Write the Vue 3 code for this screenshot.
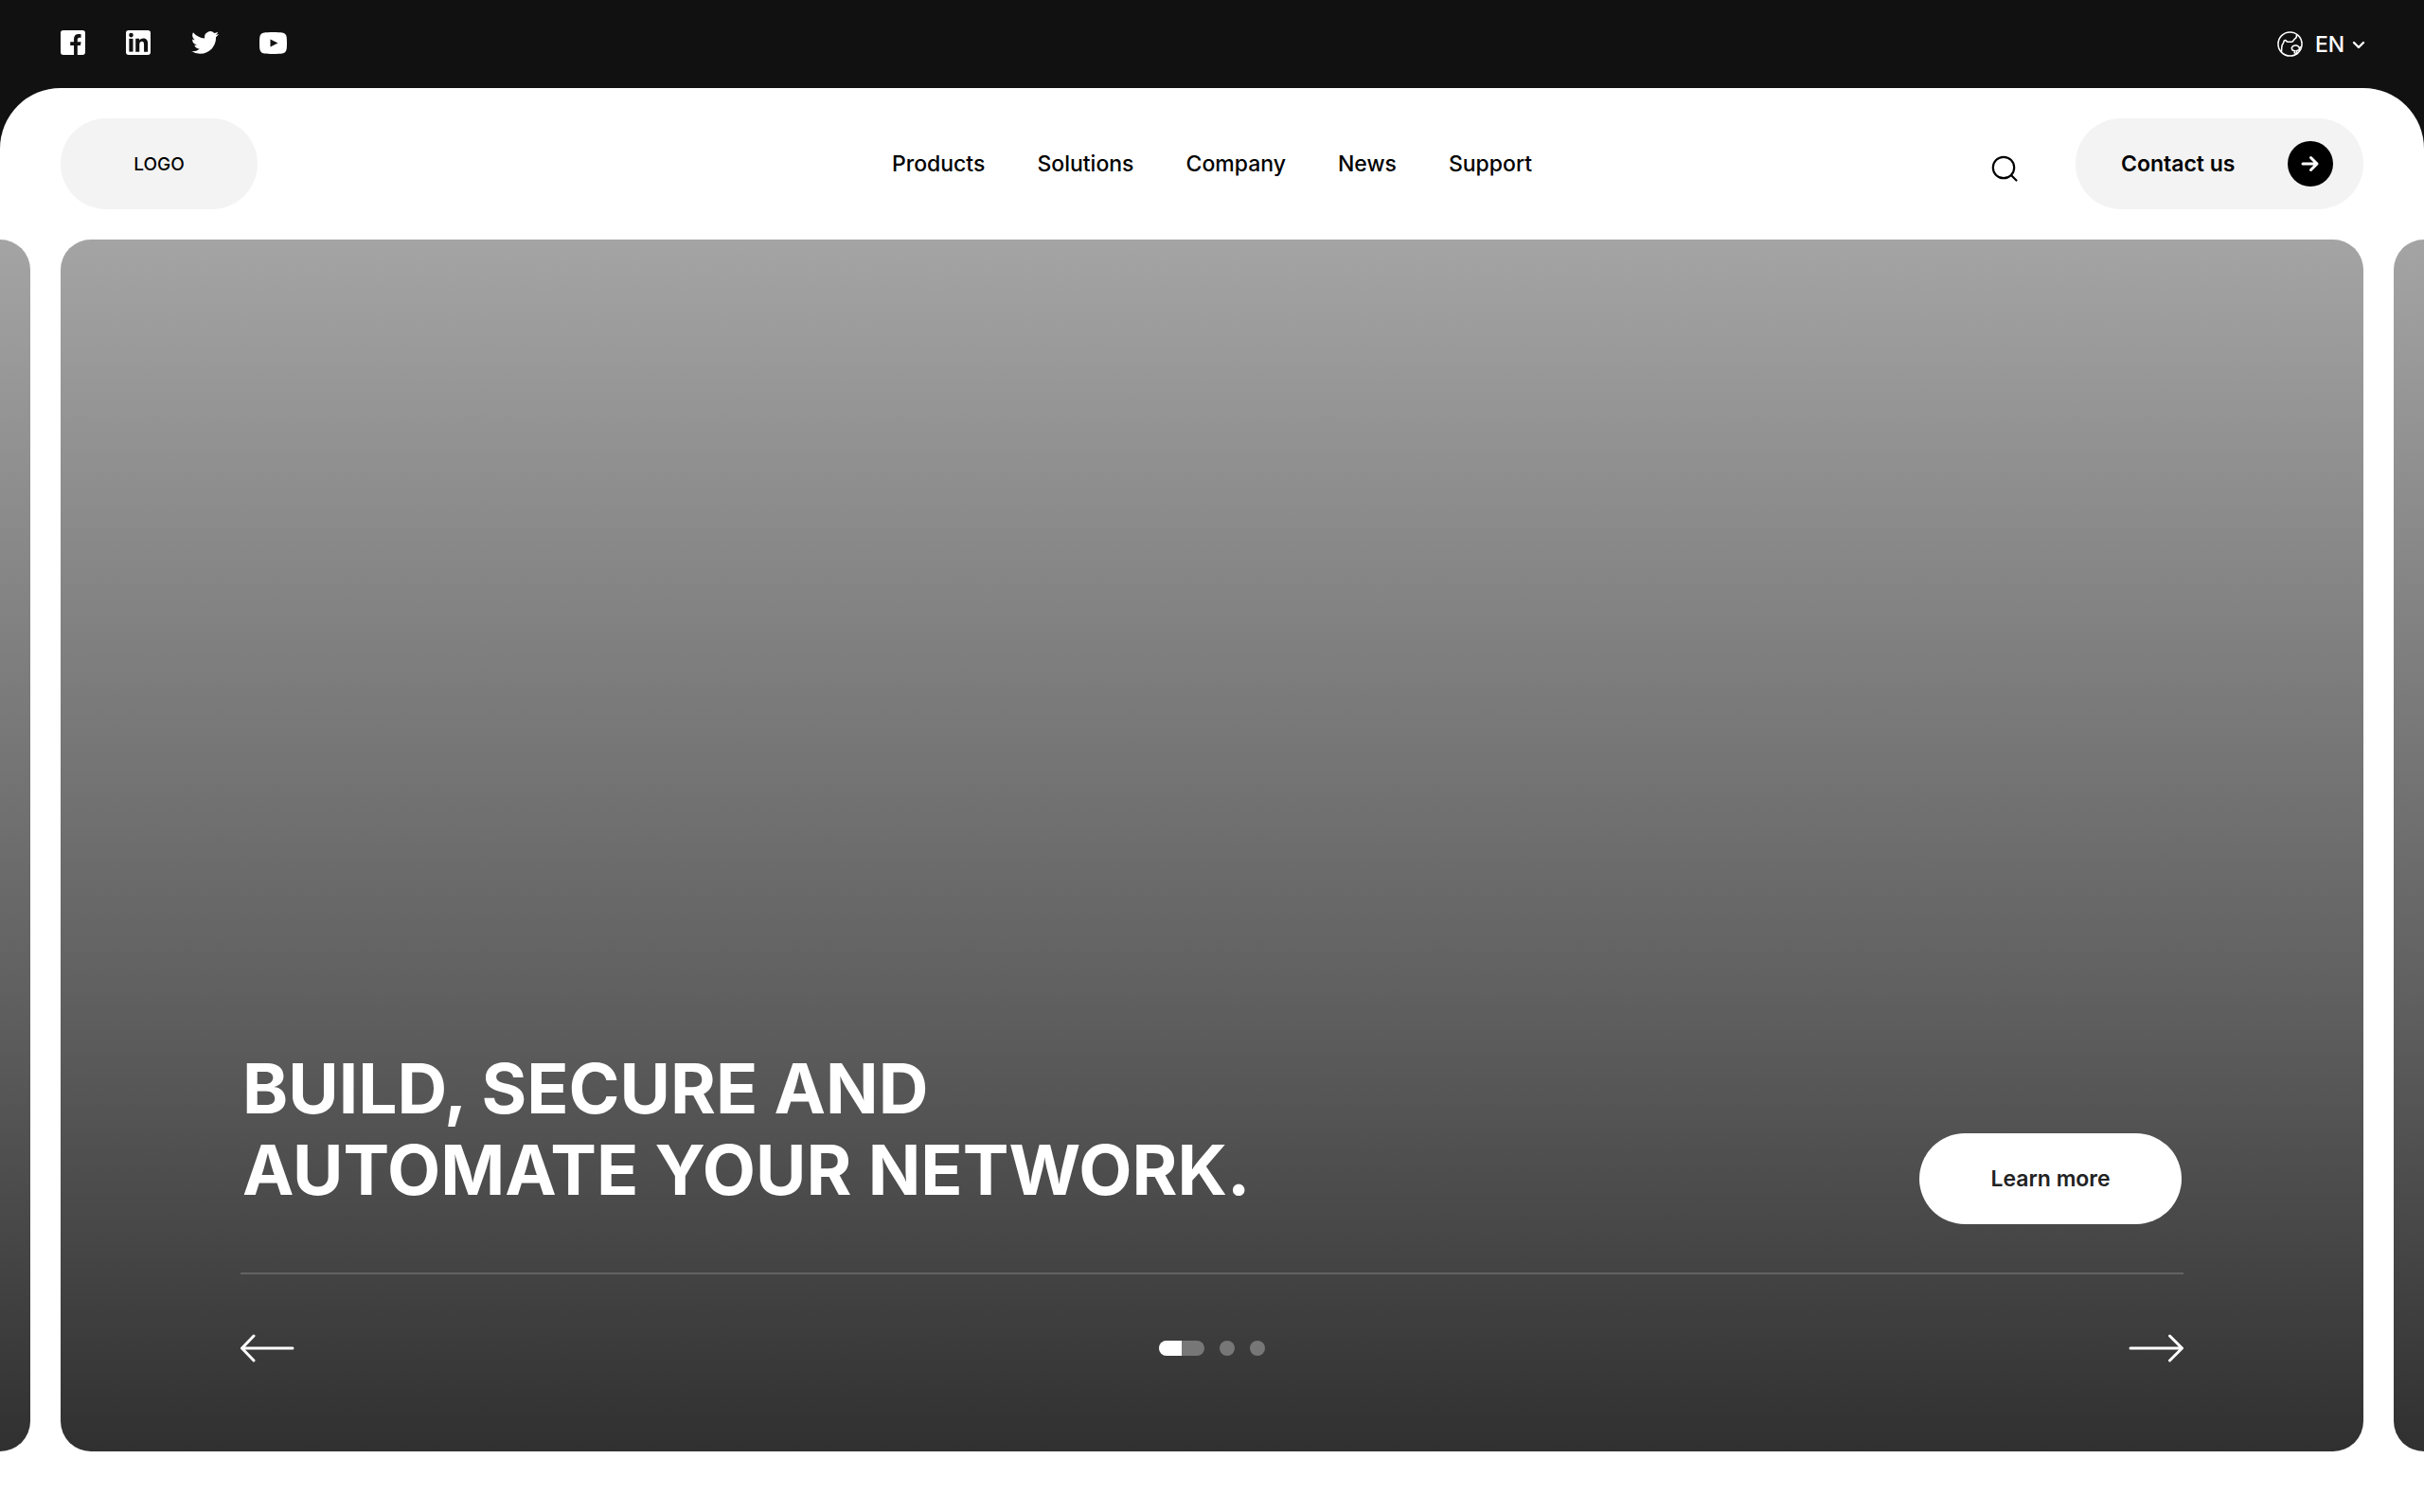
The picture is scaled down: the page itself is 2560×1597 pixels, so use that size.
<script setup>
import { ref } from 'vue'

const navItems = ['Products', 'Solutions', 'Company', 'News', 'Support']

const slides = [0, 1, 2]
const active = ref(0)
const progress = ref(50)
const language = ref('EN')

function go(step) {
  active.value = (active.value + step + slides.length) % slides.length
}
</script>

<template>
  <div class="page">
    <div class="topbar">
      <div class="social">
        <a href="#" aria-label="Facebook">
          <svg width="26" height="26" viewBox="0 0 27 27">
            <path
              fill="#fff"
              d="M3 0h21a3 3 0 0 1 3 3v21a3 3 0 0 1-3 3h-5.500V16.500h3.300l.6-3.900h-3.900v-2.400c0-1.200.6-2.200 2.200-2.200h1.700V4.400c-.6-.1-1.600-.3-2.700-.3-3.200 0-5.100 1.900-5.100 5.300v3.200h-4v3.900h4V27H3a3 3 0 0 1-3-3V3a3 3 0 0 1 3-3z"
            />
          </svg>
        </a>
        <a href="#" aria-label="LinkedIn">
          <svg width="26" height="26" viewBox="0 0 27 27">
            <rect width="27" height="27" rx="3" fill="#fff" />
            <g fill="#111">
              <circle cx="5.700" cy="5.300" r="2.400" />
              <path d="M3.500 9.200h4.300V23.500H3.500z" />
              <path
                d="M10.600 9.200h4.100v1.900c.7-1.300 2.200-2.300 4.300-2.300 4 0 5 2.500 5 6.200v8.500h-4.200v-7.500c0-2-.3-3.700-2.300-3.700s-2.700 1.500-2.700 3.600v7.600h-4.200z"
              />
            </g>
          </svg>
        </a>
        <a href="#" aria-label="Twitter">
          <svg width="29" height="26" viewBox="0 1.500 24 21">
            <path
              fill="#fff"
              d="M23.950 4.570a10 10 0 0 1-2.820.77 4.960 4.960 0 0 0 2.160-2.720c-.95.550-2 .95-3.130 1.180a4.920 4.920 0 0 0-8.380 4.480C7.690 8.090 4.070 6.130 1.640 3.160a4.820 4.820 0 0 0-.67 2.480c0 1.710.87 3.210 2.190 4.100a4.900 4.900 0 0 1-2.230-.62v.06a4.920 4.920 0 0 0 3.950 4.830 5 5 0 0 1-2.210.08 4.940 4.940 0 0 0 4.600 3.420A9.870 9.870 0 0 1 0 19.540a13.990 13.990 0 0 0 7.560 2.210c9.050 0 14-7.500 14-13.980 0-.21 0-.42-.02-.63a9.940 9.940 0 0 0 2.460-2.550z"
            />
          </svg>
        </a>
        <a href="#" aria-label="YouTube">
          <svg width="29" height="23" viewBox="0 0 29 23">
            <path
              fill="#fff"
              d="M14.500 0c4 0 7.500.2 9.500.5 2.800.4 4.300 1.900 4.700 4.700.2 1.700.3 3.900.3 6.300s-.1 4.600-.3 6.300c-.4 2.800-1.900 4.300-4.700 4.700-2 .3-5.500.5-9.500.5s-7.500-.2-9.500-.5c-2.800-.4-4.300-1.900-4.700-4.700C.1 16.100 0 13.900 0 11.500s.1-4.600.3-6.300C.7 2.400 2.200.9 5 .5 7 .2 10.500 0 14.500 0z"
            />
            <path fill="#111" d="M11.500 7.500v8l8-4z" />
          </svg>
        </a>
      </div>

      <label class="language">
        <svg width="27" height="27" viewBox="0 0 28 28" fill="none" stroke="#fff" stroke-width="1.600" stroke-linejoin="round" aria-hidden="true">
          <circle cx="14" cy="14" r="13" />
          <path d="M4.500 22.800c.6-2.600.1-5 .9-7.800.3-1 1.300-1.400 1.500-2.600.2-1.400.8-2.700 2-2.600 1.200.2 1 1.700 2.600 1.800 1.700.1 3.400.4 5-.2 1.500-.7 1.500-2.200 3-3.300 1.900-1.200 2.200-2.400 1.600-4.300" />
          <path d="M20.300 15.400l-3.300 1-1.200 2 .8 2.400 2.700.8-.5 2 3.500 1.200M26.500 16.600l-2.200 1.600M20.300 15.400l2.200.6 1.800 2.200-.3 2.200-3 1.200 1.200 3" />
        </svg>
        <select v-model="language" aria-label="Language">
          <option>EN</option>
        </select>
        <svg width="14" height="14" viewBox="0 0 14 14" fill="none" stroke="#fff" stroke-width="2.400" stroke-linecap="round" stroke-linejoin="round" aria-hidden="true">
          <path d="M2 5l5 5 5-5" />
        </svg>
      </label>
    </div>

    <main class="content">
      <header class="header">
        <a class="logo" href="#">LOGO</a>

        <nav class="nav">
          <a v-for="item in navItems" :key="item" href="#">{{ item }}</a>
        </nav>

        <div class="header-actions">
          <button type="button" class="search" aria-label="Search">
            <svg width="32" height="40" viewBox="0 0 32 40" fill="none" stroke="#000" stroke-width="2.200" stroke-linecap="round">
              <circle cx="14" cy="24" r="11.200" />
              <path d="M22 32l5.500 5.500" />
            </svg>
          </button>
          <button type="button" class="contact">
            Contact us
            <span class="contact-icon">
              <svg width="20" height="20" viewBox="0 0 20 20" fill="none" stroke="#fff" stroke-width="3" stroke-linecap="round" stroke-linejoin="round">
                <path d="M2 10h15M10.500 3.500l6.500 6.500-6.500 6.500" />
              </svg>
            </span>
          </button>
        </div>
      </header>

      <section class="carousel">
        <div class="peek peek-left"></div>

        <article class="slide">
          <div class="slide-main">
            <h1>BUILD, SECURE AND<br />AUTOMATE YOUR NETWORK.</h1>
            <button type="button" class="learn-more">Learn more</button>
          </div>

          <div class="controls">
            <button type="button" class="arrow" aria-label="Previous slide" @click="go(-1)">
              <svg width="58" height="30" viewBox="1 0 58 30" fill="none" stroke="#fff" stroke-width="3" stroke-linecap="round" stroke-linejoin="round">
                <path d="M56 15H2.500M15 2L2.500 15 15 28" />
              </svg>
            </button>
            <div class="dots">
              <button
                v-for="slide in slides"
                :key="slide"
                type="button"
                class="dot"
                :class="{ active: slide === active }"
                :aria-label="`Slide ${slide + 1}`"
                @click="active = slide"
              >
                <span v-if="slide === active" class="dot-progress" :style="{ width: progress + '%' }"></span>
              </button>
            </div>
            <button type="button" class="arrow" aria-label="Next slide" @click="go(1)">
              <svg width="58" height="30" viewBox="0 0 58 30" fill="none" stroke="#fff" stroke-width="3" stroke-linecap="round" stroke-linejoin="round">
                <path d="M2 15h54M43.500 2l13 13-13 13" />
              </svg>
            </button>
          </div>
        </article>

        <div class="peek peek-right"></div>
      </section>
    </main>
  </div>
</template>

<style>
body {
  margin: 0;
  background: #fff;
}
</style>

<style scoped>
.page {
  --slide-bg: linear-gradient(180deg, #a4a4a4 0%, #5d5d5d 65%, #303030 100%);
  display: flex;
  flex-direction: column;
  min-height: 100vh;
  background: #111;
  color: #000;
  font-family: Inter, "Liberation Sans", sans-serif;
  font-size: 23px;
  font-weight: 500;
}

a {
  color: inherit;
  text-decoration: none;
}

button {
  padding: 0;
  border: none;
  background: none;
  color: inherit;
  font: inherit;
  cursor: pointer;
}

svg {
  display: block;
}

.topbar {
  display: flex;
  align-items: center;
  justify-content: space-between;
  height: 93px;
  padding: 0 62px 0 64px;
}

.social {
  display: flex;
  align-items: center;
  gap: 43px;
  padding-bottom: 3px;
}

.language {
  display: flex;
  align-items: center;
  color: #fff;
}

.language select {
  width: 34px;
  margin: 0 5px 0 13px;
  padding: 0;
  border: none;
  appearance: none;
  background: transparent;
  color: inherit;
  font: inherit;
  cursor: pointer;
}

.content {
  display: flex;
  flex: 1;
  flex-direction: column;
  padding-bottom: 64px;
  border-radius: 64px 64px 0 0;
  background: #fff;
}

.header {
  display: grid;
  grid-template-columns: 1fr auto 1fr;
  align-items: center;
  padding: 32px 64px;
}

.logo {
  display: flex;
  align-items: center;
  justify-content: center;
  width: 208px;
  height: 96px;
  border-radius: 48px;
  background: #f3f3f3;
  font-size: 19px;
}

.nav {
  display: flex;
  gap: 55px;
}

.header-actions {
  display: flex;
  align-items: center;
  justify-content: flex-end;
  gap: 58px;
}

.contact {
  display: flex;
  align-items: center;
  justify-content: space-between;
  width: 304px;
  height: 96px;
  padding: 0 32px 0 48px;
  border-radius: 48px;
  background: #f3f3f3;
  font-weight: 600;
}

.contact-icon {
  display: flex;
  align-items: center;
  justify-content: center;
  width: 48px;
  height: 48px;
  border-radius: 50%;
  background: #000;
}

.carousel {
  display: grid;
  flex: 1;
  grid-template-columns: 32px 1fr 32px;
  gap: 32px;
}

.peek {
  background: var(--slide-bg);
}

.peek-left {
  border-radius: 0 32px 32px 0;
}

.peek-right {
  border-radius: 32px 0 0 32px;
}

.slide {
  display: flex;
  flex-direction: column;
  justify-content: flex-end;
  padding: 94px 190px;
  border-radius: 32px;
  background: var(--slide-bg);
  color: #fff;
}

.slide-main {
  display: flex;
  align-items: flex-end;
  justify-content: space-between;
  padding: 0 2px 51px;
  border-bottom: 2px solid #636363;
}

h1 {
  margin: 0;
  padding-bottom: 14px;
  font-size: 73px;
  font-weight: 700;
  line-height: 86px;
}

.learn-more {
  width: 277px;
  height: 96px;
  border-radius: 48px;
  background: #fff;
  color: #222;
  font-weight: 600;
}

.controls {
  display: flex;
  align-items: center;
  justify-content: space-between;
  padding-top: 63px;
}

.dots {
  display: flex;
  gap: 16px;
}

.dot {
  width: 16px;
  height: 16px;
  overflow: hidden;
  border-radius: 8px;
  background: #777;
}

.dot.active {
  width: 48px;
}

.dot-progress {
  display: block;
  height: 100%;
  background: #fff;
}
</style>
